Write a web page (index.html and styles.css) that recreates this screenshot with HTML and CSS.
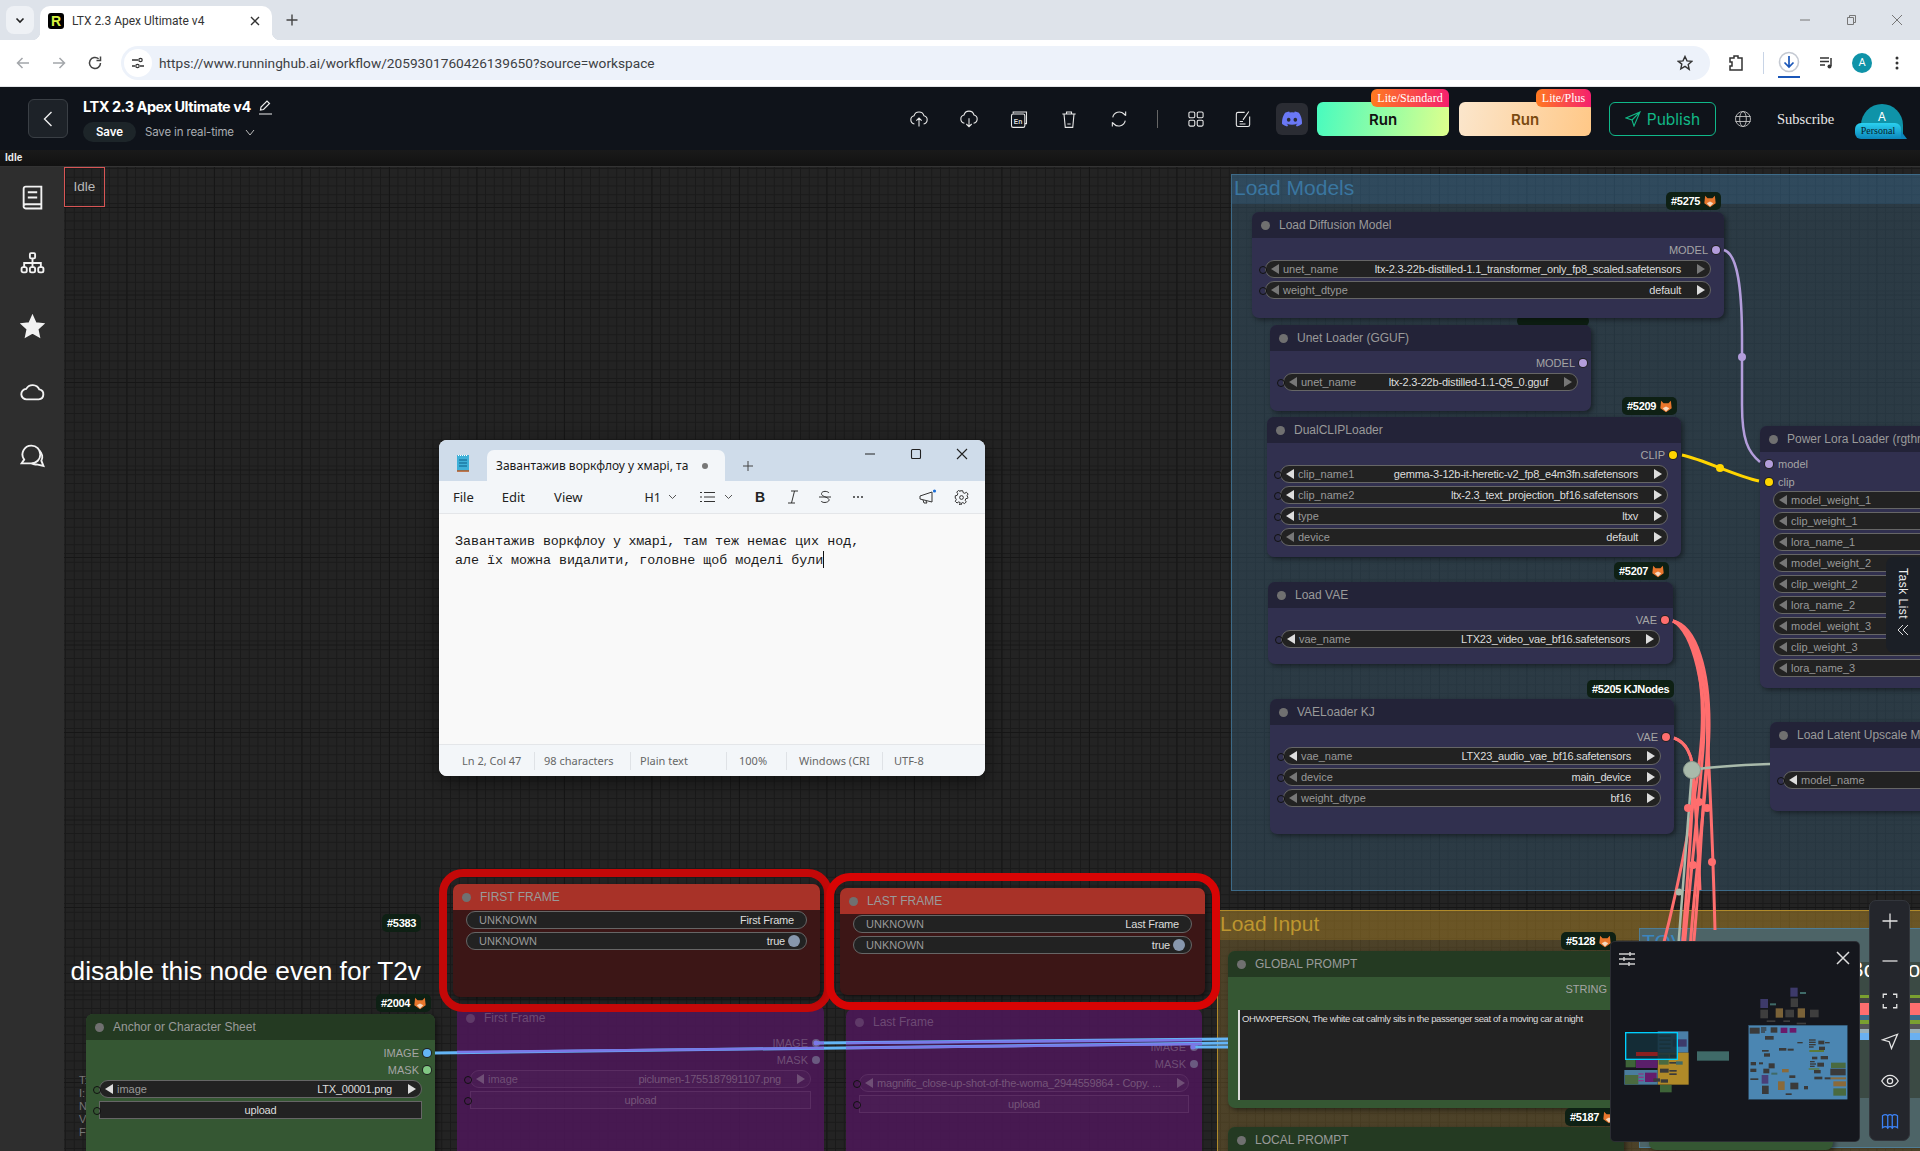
FILE: index.html
```html
<!DOCTYPE html>
<html lang="en">
<head>
    <meta charset="UTF-8">
    <meta name="viewport" content="width=device-width, initial-scale=1.0">
    <title>LTX 2.3 Apex Ultimate v4</title>
    <link rel="stylesheet" href="styles.css">
</head>
<body>
<svg class="defs" width="0" height="0">
    <symbol id="fox" viewBox="0 0 14 16"><path d="M1 1l3 3h6l3-3 1 9-7 5-7-5z" fill="#e8762c"/><path d="M3 10l4-2 4 2-4 4z" fill="#f5d9c0"/></symbol>
</svg>

<!-- browser chrome -->
<div class="tabstrip">
    <div class="tab-menu"><svg width="12" height="12" viewBox="0 0 12 12"><path d="M2.5 4.5L6 8l3.5-3.5" fill="none" stroke="#222" stroke-width="1.6"/></svg></div>
    <div class="tab">
        <span class="favicon">R</span>
        <span class="tab-title">LTX 2.3 Apex Ultimate v4</span>
        <svg width="12" height="12" viewBox="0 0 12 12"><path d="M2 2l8 8M10 2l-8 8" stroke="#333" stroke-width="1.4"/></svg>
    </div>
    <svg class="tab-new" width="14" height="14" viewBox="0 0 14 14"><path d="M7 1.5v11M1.5 7h11" stroke="#444" stroke-width="1.4"/></svg>
    <div class="win-controls">
        <svg width="12" height="12" viewBox="0 0 12 12"><path d="M1 6h10" stroke="#777"/></svg>
        <svg width="12" height="12" viewBox="0 0 12 12"><path d="M2.5 3.5h6v7h-6zM4.5 3.5v-2h6v7h-2" fill="none" stroke="#777"/></svg>
        <svg width="12" height="12" viewBox="0 0 12 12"><path d="M1 1l10 10M11 1L1 11" stroke="#777"/></svg>
    </div>
</div>
<div class="toolbar">
    <svg width="16" height="16" viewBox="0 0 16 16"><path d="M14 8H2.5M7.5 3l-5 5 5 5" fill="none" stroke="#a3a6aa" stroke-width="1.5"/></svg>
    <svg class="ic-fwd" width="16" height="16" viewBox="0 0 16 16"><path d="M2 8h11.5M8.5 3l5 5-5 5" fill="none" stroke="#a3a6aa" stroke-width="1.5"/></svg>
    <svg class="ic-fwd" width="16" height="16" viewBox="0 0 16 16"><path d="M13.5 8A5.5 5.5 0 1 1 11.6 3.8M13.5 1.5v4h-4" fill="none" stroke="#444" stroke-width="1.5"/></svg>
    <div class="urlbar">
        <span class="site-ic"><svg width="14" height="14" viewBox="0 0 14 14"><path d="M1 4h6M1 10h3M9 10h4" stroke="#333" stroke-width="1.3"/><circle cx="9.5" cy="4" r="1.7" fill="none" stroke="#333" stroke-width="1.2"/><circle cx="6.5" cy="10" r="1.7" fill="none" stroke="#333" stroke-width="1.2"/></svg></span>
        <span class="url">https://www.runninghub.ai/workflow/2059301760426139650?source=workspace</span>
        <svg class="url-star" width="16" height="16" viewBox="0 0 16 16"><path d="M8 1.5l2 4.4 4.7.5-3.5 3.2 1 4.7L8 11.4l-4.2 2.4 1-4.7L1.3 6.4 6 5.9z" fill="none" stroke="#333" stroke-width="1.4"/></svg>
    </div>
    <svg class="ic-ext" width="16" height="18" viewBox="0 0 16 18"><path d="M2 4h4V2h4v2h4v12H2v-4h2V8H2z" fill="none" stroke="#333" stroke-width="1.5"/></svg>
    <span class="tool-sep"></span>
    <span class="ic-dl"><svg width="22" height="22" viewBox="0 0 22 22"><circle cx="11" cy="11" r="9.5" fill="none" stroke="#c4c9d2" stroke-width="1.6"/><path d="M11 5v11M6.5 11.5L11 16l4.5-4.5" fill="none" stroke="#1a56b8" stroke-width="1.7"/></svg></span>
    <svg class="ic-media" width="16" height="16" viewBox="0 0 16 16"><path d="M1 3h9M1 6.5h9M1 10h5" stroke="#333" stroke-width="1.5"/><path d="M12 3v8" stroke="#333" stroke-width="1.5"/><circle cx="10.5" cy="11.5" r="2" fill="#333"/></svg>
    <span class="chrome-avatar">A</span>
    <svg class="ic-more" width="4" height="14" viewBox="0 0 4 14"><circle cx="2" cy="2" r="1.5" fill="#333"/><circle cx="2" cy="7" r="1.5" fill="#333"/><circle cx="2" cy="12" r="1.5" fill="#333"/></svg>
</div>

<!-- app header -->
<header class="app-header">
    <button class="back-btn"><svg width="10" height="16" viewBox="0 0 10 16"><path d="M8.5 1L1.5 8l7 7" fill="none" stroke="#eee" stroke-width="1.4"/></svg></button>
    <div class="title-col">
        <div class="wf-title">LTX 2.3 Apex Ultimate v4
            <svg width="15" height="16" viewBox="0 0 15 16"><path d="M2.5 11l.5-3 6-6 2.5 2.5-6 6zM1 15h13" fill="none" stroke="#eee" stroke-width="1.2"/></svg>
        </div>
        <div class="save-row">
            <span class="save-btn">Save</span>
            <span class="save-mode">Save in real-time</span>
            <svg width="10" height="7" viewBox="0 0 10 7"><path d="M1 1l4 5 4-5" fill="none" stroke="#bbb" stroke-width="1"/></svg>
        </div>
    </div>
    <div class="head-tools">
        <svg class="ht" viewBox="0 0 24 24"><path d="M6.500 18A5 5 0 0 1 6 8.200a6.200 6.200 0 0 1 12 0A5 5 0 0 1 17.500 18M12 21v-10M8.800 14l3.200-3.200 3.200 3.200"/></svg>
        <svg class="ht" viewBox="0 0 24 24"><path d="M6.500 17A5 5 0 0 1 6 7.200a6.200 6.200 0 0 1 12 0A5 5 0 0 1 17.500 17M12 11v10M8.800 18l3.200 3.200 3.200-3.200"/></svg>
        <svg class="ht" viewBox="0 0 24 24"><path d="M5 5.500V3.500h16v14h-2"/><rect x="3" y="6" width="16" height="16" rx="2"/><text x="5.800" y="17.500" class="ht-en">En</text></svg>
        <svg class="ht" viewBox="0 0 24 24"><path d="M4 6h16M9 6V3.500h6V6M6 6l1.500 16h9L18 6M10 18h4"/></svg>
        <svg class="ht" viewBox="0 0 24 24"><path d="M4.500 10a8 8 0 0 1 13.500-4l2 2M19.500 14A8 8 0 0 1 6 18l-2-2M20 3v5M4 21v-5"/></svg>
        <span class="head-sep"></span>
        <svg class="ht ht-grid" viewBox="0 0 24 24"><rect x="3.500" y="3.500" width="7" height="7" rx="1.500"/><rect x="13.500" y="3.500" width="7" height="7" rx="1.500"/><rect x="3.500" y="13.500" width="7" height="7" rx="1.500"/><rect x="13.500" y="13.500" width="7" height="7" rx="1.500"/></svg>
        <svg class="ht ht-note" viewBox="0 0 24 24"><path d="M14 4H6a2 2 0 0 0-2 2v13a2 2 0 0 0 2 2h12a2 2 0 0 0 2-2V9M12 13l7-10M8 15h4M8 18h7"/></svg>
        <span class="discord"><svg width="20" height="20" viewBox="0 0 24 24"><path fill="#6a78f5" d="M20.317 4.37a19.791 19.791 0 0 0-4.885-1.515.074.074 0 0 0-.079.037c-.21.375-.444.864-.608 1.25a18.27 18.27 0 0 0-5.487 0 12.64 12.64 0 0 0-.617-1.25.077.077 0 0 0-.079-.037A19.736 19.736 0 0 0 3.677 4.37a.07.07 0 0 0-.032.027C.533 9.046-.32 13.58.099 18.057a.082.082 0 0 0 .031.057 19.9 19.9 0 0 0 5.993 3.03.078.078 0 0 0 .084-.028c.462-.63.874-1.295 1.226-1.994a.076.076 0 0 0-.041-.106 13.107 13.107 0 0 1-1.872-.892.077.077 0 0 1-.008-.128 10.2 10.2 0 0 0 .372-.292.074.074 0 0 1 .077-.01c3.928 1.793 8.18 1.793 12.062 0a.074.074 0 0 1 .078.01c.12.098.246.198.373.292a.077.077 0 0 1-.006.127 12.299 12.299 0 0 1-1.873.892.077.077 0 0 0-.041.107c.36.698.772 1.362 1.225 1.993a.076.076 0 0 0 .084.028 19.839 19.839 0 0 0 6.002-3.03.077.077 0 0 0 .032-.054c.5-5.177-.838-9.674-3.549-13.66a.061.061 0 0 0-.031-.03zM8.020 15.330c-1.183 0-2.157-1.085-2.157-2.419 0-1.333.956-2.419 2.157-2.419 1.210 0 2.176 1.096 2.157 2.420 0 1.333-.956 2.418-2.157 2.418zm7.975 0c-1.183 0-2.157-1.085-2.157-2.419 0-1.333.955-2.419 2.157-2.419 1.210 0 2.176 1.096 2.157 2.420 0 1.333-.946 2.418-2.157 2.418z"/></svg></span>
        <button class="run run-std">Run<span class="tier">Lite/Standard</span></button>
        <button class="run run-plus">Run<span class="tier">Lite/Plus</span></button>
        <button class="publish"><svg width="16" height="16" viewBox="0 0 16 16"><path d="M15 1L1 7l6 2 2 6zM15 1L7 9" fill="none" stroke="#12b886" stroke-width="1.1"/></svg>Publish</button>
        <svg class="ht ht-globe" viewBox="0 0 24 24"><circle cx="12" cy="12" r="9"/><ellipse cx="12" cy="12" rx="4" ry="9"/><path d="M3 9h18M3 15h18"/></svg>
        <span class="subscribe">Subscribe</span>
        <span class="user"><span class="user-a">A</span><span class="user-tag">Personal</span></span>
    </div>
</header>
<div class="status-strip">Idle</div>

<div class="workspace">
    <aside class="sidebar">
        <svg viewBox="0 0 24 24"><path d="M3.500 20V3.500A2 2 0 0 1 5.500 1.500h15v21h-15a2 2 0 0 1-2-2.500 2 2 0 0 1 2-1.500h15M7.500 7h9M7.500 12h9"/></svg>
        <svg viewBox="0 0 24 24"><rect x="9.500" y="3" width="5" height="5" rx="1"/><rect x="1.500" y="16.500" width="5" height="5" rx="1.500"/><rect x="9.500" y="16.500" width="5" height="5" rx="1.500"/><rect x="17.500" y="16.500" width="5" height="5" rx="1.500"/><path d="M12 8v8.500M4 16.500v-4h16v4"/></svg>
        <svg viewBox="0 0 24 24"><path class="solid" d="M12 2l3 6.700 7.200.8-5.400 4.900 1.500 7.200L12 18l-6.300 3.600 1.500-7.200L1.800 9.500 9 8.700z"/></svg>
        <svg viewBox="0 0 24 24"><path d="M6.500 19.500a5 5 0 0 1-.5-10A7 7 0 0 1 18.500 10 4.800 4.800 0 0 1 18 19.500z"/></svg>
        <svg viewBox="0 0 24 24"><path d="M11 2.500a8.500 8.500 0 0 1 0 17H1.500l2.500-3.500A8.500 8.500 0 0 1 11 2.500z"/><path d="M18.500 7.500a7.500 7.500 0 0 1 2 9.500l2 5-6.500-1.500a7 7 0 0 1-5-1"/></svg>
    </aside>

    <main class="canvas">
        <!-- groups -->
        <section class="group g-models"><h3>Load Models</h3></section>
        <section class="group g-input"><h3>Load Input</h3></section>
        <section class="group g-tov"><h3>TOV</h3></section>
        <div class="tov-body"></div>
        <span class="big-frag frag-a">Bo</span>
        <span class="big-frag frag-b">ox</span>
        <div class="stripes stripes-a"></div>
        <div class="stripes stripes-b"></div>

        <div class="under-badge"></div>

        <div class="note">t disable this node even for T2v</div>
        <div class="side-text">T:<br>I:<br>N<br>V<br>F</div>
        <div class="idle-box">Idle</div>

        <!-- load models -->
        <div class="node n-5275">
            <div class="node-head"><b class="dot"></b>Load Diffusion Model</div>
            <div class="node-body">
                <div class="out">MODEL<b class="sock s-model"></b></div>
                <div class="w"><i class="l off"></i><span>unet_name</span><em>ltx-2.3-22b-distilled-1.1_transformer_only_fp8_scaled.safetensors</em><i class="r off"></i></div>
                <div class="w"><i class="l off"></i><span>weight_dtype</span><em>default</em><i class="r"></i></div>
            </div>
        </div>
        <div class="node n-unet">
            <div class="node-head"><b class="dot"></b>Unet Loader (GGUF)</div>
            <div class="node-body">
                <div class="out">MODEL<b class="sock s-model"></b></div>
                <div class="w"><i class="l off"></i><span>unet_name</span><em>ltx-2.3-22b-distilled-1.1-Q5_0.gguf</em><i class="r off"></i></div>
            </div>
        </div>
        <div class="node n-dual">
            <div class="node-head"><b class="dot"></b>DualCLIPLoader</div>
            <div class="node-body">
                <div class="out">CLIP<b class="sock s-clip"></b></div>
                <div class="w"><i class="l"></i><span>clip_name1</span><em>gemma-3-12b-it-heretic-v2_fp8_e4m3fn.safetensors</em><i class="r"></i></div>
                <div class="w"><i class="l"></i><span>clip_name2</span><em>ltx-2.3_text_projection_bf16.safetensors</em><i class="r"></i></div>
                <div class="w"><i class="l"></i><span>type</span><em>ltxv</em><i class="r"></i></div>
                <div class="w"><i class="l off"></i><span>device</span><em>default</em><i class="r"></i></div>
            </div>
        </div>
        <div class="node n-vae">
            <div class="node-head"><b class="dot"></b>Load VAE</div>
            <div class="node-body">
                <div class="out">VAE<b class="sock s-vae"></b></div>
                <div class="w"><i class="l"></i><span>vae_name</span><em>LTX23_video_vae_bf16.safetensors</em><i class="r"></i></div>
            </div>
        </div>
        <div class="node n-kj">
            <div class="node-head"><b class="dot"></b>VAELoader KJ</div>
            <div class="node-body">
                <div class="out">VAE<b class="sock s-vae"></b></div>
                <div class="w"><i class="l"></i><span>vae_name</span><em>LTX23_audio_vae_bf16.safetensors</em><i class="r"></i></div>
                <div class="w"><i class="l off"></i><span>device</span><em>main_device</em><i class="r"></i></div>
                <div class="w"><i class="l off"></i><span>weight_dtype</span><em>bf16</em><i class="r"></i></div>
            </div>
        </div>
        <div class="node n-lora">
            <div class="node-head"><b class="dot"></b>Power Lora Loader (rgthree)</div>
            <div class="node-body">
                <div class="in"><b class="sock s-model"></b>model</div>
                <div class="in"><b class="sock s-clip"></b>clip</div>
                <div class="w no-sock"><i class="l off"></i><span>model_weight_1</span></div>
                <div class="w no-sock"><i class="l off"></i><span>clip_weight_1</span></div>
                <div class="w no-sock"><i class="l off"></i><span>lora_name_1</span></div>
                <div class="w no-sock"><i class="l off"></i><span>model_weight_2</span></div>
                <div class="w no-sock"><i class="l off"></i><span>clip_weight_2</span></div>
                <div class="w no-sock"><i class="l off"></i><span>lora_name_2</span></div>
                <div class="w no-sock"><i class="l off"></i><span>model_weight_3</span></div>
                <div class="w no-sock"><i class="l off"></i><span>clip_weight_3</span></div>
                <div class="w no-sock"><i class="l off"></i><span>lora_name_3</span></div>
            </div>
        </div>
        <div class="node n-upscale">
            <div class="node-head"><b class="dot"></b>Load Latent Upscale Model</div>
            <div class="node-body upscale-body">
                <div class="w"><i class="l"></i><span>model_name</span></div>
            </div>
        </div>

        <!-- muted nodes under the red frames -->
        <div class="node muted n-ff2">
            <div class="node-head"><b class="dot"></b>First Frame</div>
            <div class="node-body">
                <div class="out">IMAGE<b class="sock"></b></div>
                <div class="out">MASK<b class="sock"></b></div>
                <div class="w"><i class="l off"></i><span>image</span><em>piclumen-1755187991107.png</em><i class="r off"></i></div>
                <div class="w up"><em>upload</em></div>
            </div>
        </div>
        <div class="node muted n-lf2">
            <div class="node-head"><b class="dot"></b>Last Frame</div>
            <div class="node-body">
                <div class="out">IMAGE<b class="sock"></b></div>
                <div class="out">MASK<b class="sock"></b></div>
                <div class="w"><i class="l off"></i><span></span><em>magnific_close-up-shot-of-the-woma_2944559864 - Copy. ...</em><i class="r off"></i></div>
                <div class="w up"><em>upload</em></div>
            </div>
        </div>

        <div class="frame frame-first"></div>
        <div class="node red n-ff">
            <div class="node-head"><b class="dot"></b>FIRST FRAME</div>
            <div class="node-body red-body">
                <div class="w plain"><span>UNKNOWN</span><em>First Frame</em></div>
                <div class="w plain"><span>UNKNOWN</span><em>true</em><u></u></div>
            </div>
        </div>
        <div class="frame frame-last"></div>
        <div class="node red n-lf">
            <div class="node-head"><b class="dot"></b>LAST FRAME</div>
            <div class="node-body red-body">
                <div class="w plain"><span>UNKNOWN</span><em>Last Frame</em></div>
                <div class="w plain"><span>UNKNOWN</span><em>true</em><u></u></div>
            </div>
        </div>

        <!-- load input -->
        <div class="node green n-anchor">
            <div class="node-head"><b class="dot"></b>Anchor or Character Sheet</div>
            <div class="node-body">
                <div class="out">IMAGE<b class="sock s-image"></b></div>
                <div class="out">MASK<b class="sock s-mask"></b></div>
                <div class="w"><i class="l"></i><span>image</span><em>LTX_00001.png</em><i class="r"></i></div>
                <div class="w up"><em>upload</em></div>
            </div>
        </div>
        <div class="node green n-global">
            <div class="node-head"><b class="dot"></b>GLOBAL PROMPT</div>
            <div class="node-body">
                <div class="out string-out">STRING</div>
                <div class="prompt">OHWXPERSON, The white cat calmly sits in the passenger seat of a moving car at night</div>
            </div>
        </div>
        <div class="node green n-local">
            <div class="node-head"><b class="dot"></b>LOCAL PROMPT</div>
        </div>
        <div class="node green n-hidden"></div>

        <!-- links -->
        <svg class="links" viewBox="64 167 1856 984">
            <g class="l-red">
                <path d="M1673 621C1698 630 1706 680 1707 720S1712 810 1715 930"/>
                <path d="M1673 621C1695 628 1704 680 1702 730S1680 880 1662 950"/>
                <path d="M1673 621C1693 632 1708 690 1703 750S1690 880 1684 950"/>
                <path d="M1673 621C1698 630 1712 700 1706 770S1700 880 1693 950"/>
                <path d="M1673 621C1696 626 1710 670 1709 730S1696 860 1690 950"/>
                <path d="M1674 738C1686 742 1692 755 1693 770S1698 840 1700 890"/>
                <path d="M1674 738C1686 742 1692 755 1693 770S1690 850 1682 950"/>
            </g>
            <path class="l-grey" d="M1692 770C1715 766 1740 765 1770 764M1692 770L1678 950"/>
            <path class="l-purple" d="M1724 250C1738 254 1742 290 1742 340V405C1742 440 1748 452 1760 462"/>
            <path class="l-yellow" d="M1682 455C1705 460 1735 476 1759 481"/>
            <g class="dots-red">
                <circle cx="1688" cy="808" r="4"/><circle cx="1699" cy="802" r="4"/><circle cx="1707" cy="808" r="4"/><circle cx="1693" cy="865" r="4"/><circle cx="1712" cy="862" r="4"/>
            </g>
            <circle cx="1679" cy="892" r="3.500" fill="#a9baab"/>
            <circle cx="1692" cy="770" r="8.500" fill="#a9baab" stroke="#8c9c8e"/>
            <circle cx="1742" cy="357" r="4" fill="#b39ddb"/>
            <circle cx="1720" cy="468" r="4" fill="#ffd500"/>
            <g class="l-blue">
                <path d="M435 1053L1228 1043"/>
                <path d="M816 1043L1228 1039"/>
                <path d="M1193 1047H1228"/>
            </g>
            <g class="l-violet">
                <path d="M457 1052L824 1048"/>
                <path d="M846 1048L1202 1044"/>
                <path d="M816 1043L824 1043M846 1043L1202 1040"/>
            </g>
            <circle cx="816" cy="1043" r="2.500" fill="#7a78e8"/>
            <circle cx="1193" cy="1047" r="2.500" fill="#7a78e8"/>
        </svg>

        <!-- id badges -->
        <span class="badge b-5275">#5275 <svg><use href="#fox"/></svg></span>
        <span class="badge b-5209">#5209 <svg><use href="#fox"/></svg></span>
        <span class="badge b-5207">#5207 <svg><use href="#fox"/></svg></span>
        <span class="badge b-5205">#5205 KJNodes</span>
        <span class="badge b-5383">#5383</span>
        <span class="badge b-2004">#2004 <svg><use href="#fox"/></svg></span>
        <span class="badge b-5128">#5128 <svg><use href="#fox"/></svg></span>
        <span class="badge b-5187">#5187 <svg><use href="#fox"/></svg></span>

        <!-- notepad window -->
        <div class="notepad">
            <div class="np-title">
                <svg class="np-icon" width="14" height="18" viewBox="0 0 14 18"><rect x="1" y="1" width="12" height="16" fill="#3fb0d8"/><path d="M3 6h8M3 9h8M3 12h8" stroke="#0d5f8a"/><path d="M1 17h12" stroke="#b8541a" stroke-width="1.500"/><path d="M2 1.500h10" stroke="#fff" stroke-dasharray="1 1"/></svg>
                <div class="np-tab"><span>Завантажив воркфлоу у хмарі, та</span><b></b></div>
                <svg class="np-plus" width="12" height="12" viewBox="0 0 12 12"><path d="M6 1v10M1 6h10" stroke="#444"/></svg>
                <div class="np-win">
                    <svg width="12" height="12" viewBox="0 0 12 12"><path d="M1 6h10" stroke="#222" stroke-width="1.100"/></svg>
                    <svg width="12" height="12" viewBox="0 0 12 12"><rect x="1.500" y="1.500" width="9" height="9" rx="1" fill="none" stroke="#222" stroke-width="1.100"/></svg>
                    <svg width="12" height="12" viewBox="0 0 12 12"><path d="M1 1l10 10M11 1L1 11" stroke="#222" stroke-width="1.100"/></svg>
                </div>
            </div>
            <div class="np-menu">
                <span class="np-m m-file">File</span><span class="np-m m-edit">Edit</span><span class="np-m m-view">View</span>
                <span class="np-h1">H1</span>
                <svg class="np-chev" width="9" height="6" viewBox="0 0 9 6"><path d="M1 1l3.500 3.500L8 1" fill="none" stroke="#555"/></svg>
                <svg class="np-list" width="15" height="12" viewBox="0 0 15 12"><path d="M4 1.500h11M4 6h11M4 10.500h11" stroke="#333"/><path d="M0 1.500h2M0 6h2M0 10.500h2" stroke="#333"/></svg>
                <svg class="np-chev" width="9" height="6" viewBox="0 0 9 6"><path d="M1 1l3.500 3.500L8 1" fill="none" stroke="#555"/></svg>
                <b class="np-b">B</b>
                <svg class="np-i" width="14" height="14" viewBox="0 0 14 14"><path d="M5 1h7M2 13h7M8.500 1l-3 12" fill="none" stroke="#333"/></svg>
                <svg class="np-s" width="14" height="14" viewBox="0 0 14 14"><path d="M11 3C10 1 4 .5 3.500 3.500S10 7 11 9.500 5 14 3 11M1 7h12" fill="none" stroke="#333"/></svg>
                <svg class="np-more" width="12" height="4" viewBox="0 0 12 4"><circle cx="2" cy="2" r="1" fill="#333"/><circle cx="6" cy="2" r="1" fill="#333"/><circle cx="10" cy="2" r="1" fill="#333"/></svg>
                <svg class="np-ann" width="18" height="16" viewBox="0 0 18 16"><path d="M1 7l12-4v10L1 10zM4 11l1 3h3l-1-2" fill="none" stroke="#333"/><circle cx="15.500" cy="2" r="1.600" fill="#1a6ed8"/></svg>
                <svg class="np-gear" width="15" height="15" viewBox="0 0 24 24"><circle cx="12" cy="12" r="3" fill="none" stroke="#333" stroke-width="1.600"/><path d="M10 2h4l.6 3 2.600 1.100 2.600-1.700 2.800 2.800-1.700 2.600L22 12.400V14l-3 .6-1.100 2.600 1.700 2.600-2.800 2.800-2.600-1.700-2.200.8-.6 3h-2.800L10 21l-2.600-1.100-2.600 1.700-2.800-2.800 1.700-2.600L2.600 14 2 14v-4l3-.6 1.100-2.600-1.700-2.600 2.800-2.800 2.600 1.700z" transform="translate(0 -.8)" fill="none" stroke="#333" stroke-width="1.600"/></svg>
            </div>
            <div class="np-text">Завантажив <span class="np-tight">воркфлоу у хмарі,</span> там теж немає цих нод,<br>але їх можна видалити, головне щоб моделі були<span class="caret"></span></div>
            <div class="np-status">
                <span class="st-1">Ln 2, Col 47</span><span class="st-2">98 characters</span><span class="st-3">Plain text</span><span class="st-4">100%</span><span class="st-5">Windows (CRI</span><span class="st-6">UTF-8</span>
            </div>
        </div>

        <!-- task list tab -->
        <div class="task-tab">
            <span>Task List</span>
            <svg width="12" height="12" viewBox="0 0 12 12"><path d="M6 1L1 6l5 5M11 1L6 6l5 5" fill="none" stroke="#ddd"/></svg>
        </div>

        <!-- minimap -->
        <div class="minimap">
            <svg class="mini-set" width="18" height="16" viewBox="0 0 18 16"><path d="M1 3h16M1 8h16M1 13h16" stroke="#ccc" stroke-width="1.500"/><path d="M12 1v4M6 6v4M11 11v4" stroke="#ccc" stroke-width="1.500"/></svg>
            <svg class="mini-x" width="14" height="14" viewBox="0 0 14 14"><path d="M1 1l12 12M13 1L1 13" stroke="#ddd" stroke-width="1.500"/></svg>
            <svg class="mini-map" viewBox="3 156 744 597">
                <rect x="143" y="424" width="92" height="64" fill="#4a7fa8"/>
                <rect x="143" y="488" width="93" height="96" fill="#b08a28"/>
                <rect x="47" y="508" width="30" height="24" fill="#3e6438"/>
                <rect x="78" y="510" width="65" height="24" fill="#5a1f6a"/>
                <rect x="43" y="540" width="100" height="44" fill="#4a7d9e"/>
                <rect x="45" y="555" width="40" height="28" fill="#4a6a40"/>
                <rect x="105" y="548" width="35" height="28" fill="#641c6c"/>
                <rect x="150" y="585" width="35" height="22" fill="#3e6438"/>
                <g class="mm-dark">
                    <rect x="148" y="436" width="34" height="5"/><rect x="148" y="448" width="34" height="5"/><rect x="148" y="460" width="34" height="5"/><rect x="148" y="472" width="34" height="5"/><rect x="188" y="448" width="42" height="22" fill="#3d3a6a"/>
                    <rect x="146" y="494" width="30" height="30" fill="#4a6a40"/><rect x="180" y="494" width="24" height="8"/><rect x="178" y="516" width="22" height="5"/><rect x="198" y="514" width="20" height="10" fill="#3f6a68"/><rect x="150" y="536" width="26" height="12"/><rect x="178" y="540" width="22" height="5"/><rect x="178" y="550" width="22" height="5"/><rect x="152" y="568" width="22" height="10"/><rect x="130" y="565" width="20" height="10"/><rect x="85" y="550" width="16" height="4" fill="#8a3a8a"/><rect x="85" y="560" width="16" height="4" fill="#8a3a8a"/><rect x="85" y="570" width="16" height="4" fill="#8a3a8a"/>
                </g>
                <rect x="261" y="484" width="96" height="28" fill="#3f6a68"/>
                <rect x="416" y="406" width="296" height="222" fill="#4b86b2" stroke="#345f80"/>
                <rect x="541" y="293" width="22" height="27" fill="#3d3a6a"/><rect x="451" y="327" width="23" height="27" fill="#3d3a6a"/><rect x="542" y="325" width="22" height="26" fill="#3e3e3e"/><rect x="451" y="359" width="23" height="26" fill="#3e3e3e"/><rect x="497" y="355" width="22" height="28" fill="#7a6238"/><rect x="526" y="359" width="26" height="23" fill="#3e3e3e"/><rect x="563" y="355" width="22" height="28" fill="#7a6238"/><rect x="600" y="359" width="26" height="23" fill="#3e3e3e"/><rect x="570" y="306" width="18" height="6" fill="#3f6a68"/><rect x="480" y="340" width="18" height="6" fill="#3f6a68"/><rect x="470" y="391" width="26" height="5" fill="#3e3e3e"/><rect x="520" y="391" width="20" height="5" fill="#3e3e3e"/><rect x="560" y="398" width="28" height="5" fill="#3e3e3e"/>
                <g class="mm-dark">
                    <rect x="419" y="413" width="30" height="18"/><rect x="453" y="412" width="16" height="4"/><rect x="453" y="418" width="16" height="4"/><rect x="453" y="424" width="12" height="4"/><rect x="482" y="412" width="20" height="16"/><rect x="512" y="413" width="20" height="16" fill="#6a1a6a"/><rect x="539" y="414" width="20" height="14" fill="#6a1a6a"/>
                    <rect x="465" y="438" width="26" height="11"/><rect x="562" y="456" width="16" height="4"/><rect x="597" y="448" width="20" height="4"/><rect x="597" y="455" width="20" height="4"/><rect x="597" y="462" width="20" height="4"/><rect x="597" y="469" width="14" height="4"/><rect x="625" y="452" width="18" height="11"/><rect x="645" y="456" width="14" height="4"/><rect x="627" y="470" width="18" height="10"/><rect x="507" y="474" width="22" height="8"/><rect x="533" y="476" width="18" height="6"/><rect x="456" y="480" width="20" height="5"/><rect x="462" y="490" width="18" height="10"/><rect x="598" y="480" width="44" height="6" fill="#5a7a3a"/><rect x="606" y="500" width="16" height="8"/><rect x="632" y="498" width="22" height="10"/><rect x="422" y="516" width="16" height="10"/><rect x="447" y="517" width="12" height="6"/><rect x="476" y="520" width="18" height="15"/><rect x="600" y="513" width="14" height="4"/><rect x="600" y="520" width="18" height="4"/><rect x="600" y="527" width="14" height="4"/><rect x="622" y="518" width="20" height="12"/><rect x="421" y="536" width="18" height="10"/><rect x="460" y="536" width="18" height="14"/><rect x="484" y="548" width="18" height="6" fill="#3f6a68"/><rect x="516" y="537" width="20" height="10" fill="#8a6a3a"/><rect x="596" y="535" width="32" height="4" fill="#5a7a3a"/><rect x="612" y="540" width="20" height="10"/><rect x="538" y="556" width="18" height="8"/><rect x="613" y="560" width="24" height="8"/><rect x="644" y="562" width="18" height="6"/><rect x="421" y="565" width="24" height="5"/><rect x="455" y="555" width="20" height="26" fill="#4a3f78"/><rect x="456" y="587" width="20" height="25"/><rect x="504" y="574" width="20" height="26" fill="#8a6a3a"/><rect x="541" y="578" width="24" height="20"/><rect x="582" y="588" width="12" height="10"/><rect x="527" y="610" width="18" height="5"/><rect x="663" y="518" width="44" height="16" fill="#4a6a40"/><rect x="661" y="536" width="46" height="20"/><rect x="662" y="562" width="46" height="6" fill="#8a6a3a"/><rect x="670" y="574" width="38" height="15" fill="#8a6a3a"/><rect x="670" y="595" width="38" height="22" fill="#4a6a40"/>
                </g>
                <rect x="47" y="428" width="155" height="80" fill="#14303a" fill-opacity=".88"/>
                <rect x="78" y="486" width="65" height="12" fill="#8a2020"/>
                <rect x="47" y="428" width="155" height="80" fill="none" stroke="#00d0ff" stroke-width="4"/>
            </svg>
        </div>

        <!-- zoom controls -->
        <div class="controls">
            <svg viewBox="0 0 24 24"><path d="M12 2v20M2 12h20"/></svg>
            <svg viewBox="0 0 24 24"><path d="M2 12h20"/></svg>
            <svg viewBox="0 0 24 24"><path d="M8 3H3v5M16 3h5v5M8 21H3v-5M16 21h5v-5"/></svg>
            <svg viewBox="0 0 24 24"><path d="M22 3L2 10.500l9 2.500 3 9z"/></svg>
            <svg viewBox="0 0 24 24"><path d="M1 12c3-5 7-7.500 11-7.500s8 2.500 11 7.500c-3 5-7 7.500-11 7.500S4 17 1 12z"/><circle cx="12" cy="12" r="3.500"/></svg>
            <svg class="ctl-map" viewBox="0 0 24 24"><path d="M2 5c3-2 5-2 7 0v16c-2-2-4-2-7 0zM9 5c2-2 4-2 6 0v16c-2-2-4-2-6 0zM15 5c2-2 4-2 7 0v16c-3-2-5-2-7 0z"/></svg>
        </div>
    </main>
</div>
</body>
</html>
```

FILE: styles.css
```css
* {
    box-sizing: border-box;
}
html, body {
    margin: 0;
    padding: 0;
    height: 100%;
    overflow: hidden;
}
body {
    display: flex;
    flex-direction: column;
    font-family: "Liberation Sans", Arial, sans-serif;
    background: #202020;
}
.defs {
    position: absolute;
}

/* browser chrome */
.tabstrip {
    height: 40px;
    background: #dee3ea;
    display: flex;
    align-items: flex-end;
    flex: none;
}
.tab-menu {
    width: 28px;
    height: 28px;
    margin: 0 0 6px 6px;
    background: #eef1f5;
    border-radius: 8px;
    display: flex;
    align-items: center;
    justify-content: center;
}
.tab {
    position: relative;
    width: 232px;
    height: 34px;
    margin-left: 6px;
    padding: 0 11px 4px 8px;
    background: #fff;
    border-radius: 10px 10px 0 0;
    display: flex;
    align-items: center;
    gap: 8px;
}
.tab::before, .tab::after {
    content: "";
    position: absolute;
    bottom: 0;
    width: 8px;
    height: 8px;
}
.tab::before {
    left: -8px;
    background: radial-gradient(circle at 0 0, #dee3ea 8px, #fff 8.500px);
}
.tab::after {
    right: -8px;
    background: radial-gradient(circle at 100% 0, #dee3ea 8px, #fff 8.500px);
}
.favicon {
    width: 16px;
    height: 16px;
    background: #000;
    border-radius: 3px;
    color: #d8f341;
    font: 700 14px/16px "Liberation Sans", sans-serif;
    text-align: center;
}
.tab-title {
    flex: 1;
    font: 12px Roboto, sans-serif;
    color: #333;
}
.tab-new {
    margin: 0 0 13px 13px;
}
.win-controls {
    margin-left: auto;
    padding-right: 17px;
    margin-bottom: 14px;
    display: flex;
    gap: 34px;
}
.toolbar {
    height: 47px;
    flex: none;
    background: #fff;
    border-bottom: 1px solid #e3e5e8;
    display: flex;
    align-items: center;
    padding: 0 0 0 15px;
}
.ic-fwd {
    margin-left: 20px;
}
.urlbar {
    width: 1589px;
    height: 34px;
    margin-left: 18px;
    background: #edf2fa;
    border-radius: 17px;
    display: flex;
    align-items: center;
    padding: 0 17px 0 3px;
}
.site-ic {
    width: 28px;
    height: 28px;
    border-radius: 50%;
    background: #fff;
    display: flex;
    align-items: center;
    justify-content: center;
}
.url {
    margin-left: 7px;
    font: 13.700px Roboto, sans-serif;
    color: #3c4043;
}
.url-star {
    margin-left: auto;
}
.ic-ext {
    margin-left: 18px;
}
.tool-sep {
    width: 1px;
    height: 22px;
    background: #c8d4e6;
    margin-left: 19px;
}
.ic-dl {
    position: relative;
    margin-left: 14px;
    height: 30px;
    display: flex;
    align-items: center;
    border-bottom: 2px solid #1a56b8;
}
.ic-media {
    margin-left: 19px;
}
.chrome-avatar {
    width: 20px;
    height: 20px;
    margin-left: 17px;
    border-radius: 50%;
    background: #0f93a8;
    color: #fff;
    font: 11px/20px Roboto, sans-serif;
    text-align: center;
}
.ic-more {
    margin-left: 23px;
}

/* app header */
.app-header {
    height: 63px;
    flex: none;
    background: #0f131a;
    display: flex;
    align-items: flex-start;
    padding: 12px 17px 0 28px;
    color: #eee;
}
.back-btn {
    width: 40px;
    height: 39px;
    background: #1d2228;
    border: 1px solid #3a3f45;
    border-radius: 6px;
    display: flex;
    align-items: center;
    justify-content: center;
    padding: 0;
}
.title-col {
    margin-left: 15px;
    margin-top: -1px;
}
.wf-title {
    font: 700 14.500px/17px Inter, sans-serif;
    color: #fff;
    display: flex;
    align-items: center;
    gap: 7px;
    letter-spacing: -0.45px;
}
.save-row {
    display: flex;
    align-items: center;
    margin-top: 7px;
    font: 11.500px Inter, sans-serif;
    color: #a9adb2;
}
.save-btn {
    width: 53px;
    height: 20px;
    line-height: 20px;
    text-align: center;
    border-radius: 10px;
    background: #1d2529;
    color: #fff;
    font-weight: 600;
}
.save-mode {
    margin: 0 11px 0 9px;
    letter-spacing: -0.15px;
}
.head-tools {
    margin-left: auto;
    display: flex;
    align-items: center;
    height: 34px;
    margin-top: 3px;
}
.ht {
    width: 20px;
    height: 20px;
    margin-right: 30px;
    fill: none;
    stroke: #e8e8e8;
    stroke-width: 1.300;
}
.ht-en {
    font: 700 8px "Liberation Sans", sans-serif;
    fill: #ddd;
    stroke: none;
}
.head-sep {
    width: 1px;
    height: 18px;
    background: #666;
    margin: 0 28px 0 -2px;
}
.ht-grid {
    margin-right: 27px;
}
.ht-note {
    margin-right: 23px;
}
.discord {
    width: 32px;
    height: 32px;
    background: #2a2c33;
    border-radius: 6px;
    display: flex;
    align-items: center;
    justify-content: center;
    margin-right: 9px;
}
.run {
    position: relative;
    width: 132px;
    height: 34px;
    border: 0;
    border-radius: 6px;
    font: 600 15px Inter, sans-serif;
    padding: 0;
}
.run-std {
    background: linear-gradient(100deg, #47fbbf, #dfff8c);
    color: #111;
    margin-right: 10px;
}
.run-plus {
    background: linear-gradient(100deg, #fbe6cc, #ffc887);
    color: #7a4a10;
    margin-right: 18px;
}
.tier {
    position: absolute;
    top: -13px;
    right: 0;
    height: 18px;
    padding: 0 3px;
    background: linear-gradient(90deg, #ff7a20, #f5206e);
    border-radius: 6px 6px 0 6px;
    color: #fff;
    font: 12px/18px "Liberation Serif", serif;
}
.run-std .tier {
    width: 78px;
}
.run-plus .tier {
    width: 55px;
}
.publish {
    width: 107px;
    height: 34px;
    background: transparent;
    border: 1px solid #10b98a;
    border-radius: 6px;
    color: #12b886;
    font: 15.500px Inter, sans-serif;
    display: flex;
    align-items: center;
    justify-content: center;
    gap: 6px;
    padding: 0;
    margin-right: 17px;
}
.ht-globe {
    margin-right: 24px;
    stroke: #ccc;
    stroke-width: 1;
}
.subscribe {
    font: 14.500px "Liberation Serif", serif;
    color: #e8e8e8;
    width: 61px;
    white-space: nowrap;
}
.user {
    position: relative;
    width: 42px;
    height: 34px;
    margin: 4px 0 0 23px;
    background: #0f93a8;
    border-radius: 21px 21px 0 0;
    color: #fff;
    text-align: center;
    font: 12px/26px Inter, sans-serif;
}
.user-tag {
    position: absolute;
    left: -6px;
    top: 19px;
    width: 46px;
    height: 16px;
    background: linear-gradient(180deg, #2bd0ef, #0b86bb);
    border-radius: 6px 6px 0 6px;
    color: #06222c;
    font: 10px/16px "Liberation Serif", serif;
}
.user-tag::after {
    content: "";
    position: absolute;
    right: -6px;
    bottom: 0;
    border-left: 6px solid #0b86bb;
    border-top: 8px solid transparent;
}
.status-strip {
    height: 17px;
    flex: none;
    background: linear-gradient(#1a1a1a, #121212);
    border-bottom: 1px solid #333;
    color: #eee;
    font: 700 10px/16px "Liberation Sans", sans-serif;
    padding-left: 5px;
}

/* workspace */
.workspace {
    flex: 1;
    display: flex;
    min-height: 0;
}
.sidebar {
    width: 64px;
    flex: none;
    background: #2e2e2e;
    display: flex;
    flex-direction: column;
    align-items: center;
    padding-top: 18px;
    gap: 39.500px;
    position: relative;
    z-index: 5;
}
.sidebar svg {
    width: 25px;
    height: 25px;
    fill: none;
    stroke: #f2f2f2;
    stroke-width: 1.800;
}
.sidebar .solid {
    fill: #f2f2f2;
}
.canvas {
    flex: 1;
    position: relative;
    overflow: hidden;
    background-color: #232323;
    background-image:
        linear-gradient(90deg, #161616 1px, transparent 1px),
        linear-gradient(#161616 1px, transparent 1px),
        linear-gradient(90deg, #1a1a1a 1px, transparent 1px),
        linear-gradient(#1a1a1a 1px, transparent 1px);
    background-size: 87.500px 87.500px, 87.500px 87.500px, 8.750px 8.750px, 8.750px 8.750px;
    background-position: 62.500px 40px, 62.500px 40px, 1px 1px, 1px 1px;
}
.idle-box {
    position: absolute;
    left: 0;
    top: 0;
    width: 41px;
    height: 40px;
    border: 1px solid #d85555;
    color: #b8b8b8;
    font: 13.500px/38px "Liberation Sans", sans-serif;
    text-align: center;
}
.note {
    position: absolute;
    left: -8px;
    top: 787px;
    font-size: 26.300px;
    line-height: 34px;
    color: #fff;
    white-space: nowrap;
}
.side-text {
    position: absolute;
    left: 15px;
    top: 907px;
    color: #777;
    font-size: 11px;
    line-height: 13px;
}

/* groups */
.group {
    position: absolute;
}
.group h3 {
    margin: 0;
    font-weight: 400;
    font-size: 21px;
    line-height: 26px;
    padding-left: 2px;
}
.g-models {
    left: 1167px;
    top: 7px;
    width: 720px;
    height: 717px;
    background: linear-gradient(rgba(60, 112, 150, .5) 29px, rgba(52, 82, 102, .5) 29px);
    border: 1px solid #3d6a88;
    border-width: 1px 0 1px 1px;
}
.g-models h3 {
    color: #3a76a0;
}
.g-input {
    left: 1153px;
    top: 743px;
    width: 720px;
    height: 260px;
    background: linear-gradient(rgba(170, 130, 40, .53) 29px, rgba(150, 120, 50, .36) 29px);
    border-top: 1px solid #b08a2a;
    border-left: 1px solid #b08a2a;
}
.g-input h3 {
    color: #bd962f;
}
.g-tov {
    left: 1575px;
    top: 761px;
    width: 300px;
    height: 220px;
    background: #4d6467;
    border: 1px solid #4f7d96;
    overflow: hidden;
}
.g-tov h3 {
    color: #3a86c0;
}
.tov-body {
    position: absolute;
    left: 1576px;
    top: 795px;
    width: 300px;
    height: 136px;
    background: #3b4a44;
}
.big-frag {
    position: absolute;
    top: 790px;
    color: #fff;
    font-size: 22px;
    line-height: 26px;
}
.frag-a {
    left: 1785px;
}
.frag-b {
    left: 1844px;
}
.stripes {
    position: absolute;
    top: 828px;
    width: 20px;
    height: 45px;
    background: linear-gradient(#7aa030 0 3px, #444 3px 8px, #ff6e6e 8px 20px, #3a6a8a 20px 25px, #7aa030 25px 29px, #555 29px 34px, #9ab0b8 34px 38px, #6ab0f0 38px);
}
.stripes-a {
    left: 1787px;
}
.stripes-b {
    left: 1836px;
}

/* nodes */
.node {
    position: absolute;
    background: #31304f;
    border-radius: 7px;
    box-shadow: 2px 2px 5px rgba(0, 0, 0, .45);
    font-size: 11px;
    color: #999;
}
.node-head {
    height: 26px;
    background: #232338;
    border-radius: 7px 7px 0 0;
    display: flex;
    align-items: center;
    padding-left: 9px;
    font-size: 12px;
    color: #9a9a9a;
    white-space: nowrap;
    overflow: hidden;
}
.dot {
    width: 9px;
    height: 9px;
    border-radius: 50%;
    background: #707070;
    margin-right: 9px;
    flex: none;
}
.node-body {
    padding: 3px 13px 0;
    display: flex;
    flex-direction: column;
}
.out {
    height: 18px;
    margin-bottom: -1px;
    display: flex;
    align-items: center;
    justify-content: flex-end;
    position: relative;
    color: #a5a5a5;
}
.in {
    height: 18px;
    display: flex;
    align-items: center;
    gap: 5px;
    color: #a5a5a5;
    margin-left: -8px;
}
.sock {
    width: 8px;
    height: 8px;
    border-radius: 50%;
    background: #888;
    flex: none;
}
.out .sock {
    margin-left: 4px;
    margin-right: -9px;
}
.s-model {
    background: #b39ddb;
    box-shadow: 0 0 0 1px #222;
}
.s-clip {
    background: #ffd500;
    box-shadow: 0 0 0 1px #222;
}
.s-vae {
    background: #ff6e6e;
    box-shadow: 0 0 0 1px #222;
}
.s-image {
    background: #64b5f6;
    box-shadow: 0 0 0 1px #222;
}
.s-mask {
    background: #81c784;
    box-shadow: 0 0 0 1px #222;
}
.w {
    position: relative;
    height: 18px;
    flex: none;
    display: flex;
    align-items: center;
    background: #222;
    border: 1px solid #666;
    border-radius: 9px;
    padding: 0 5px;
    color: #999;
    white-space: nowrap;
    margin-top: 3px;
}
.out + .w {
    margin-top: 2px;
}
.w::before {
    content: "";
    position: absolute;
    left: -7px;
    top: 5px;
    width: 6px;
    height: 6px;
    border: 1px solid #111;
    border-radius: 50%;
}
.no-sock::before, .plain::before {
    display: none;
}
.w em {
    margin-left: auto;
    margin-right: 16px;
    font-style: normal;
    color: #ddd;
    letter-spacing: -0.2px;
}
.l, .r {
    width: 0;
    height: 0;
    flex: none;
    border-top: 5px solid transparent;
    border-bottom: 5px solid transparent;
}
.l {
    border-right: 8px solid #ddd;
    margin-right: 4px;
}
.r {
    border-left: 8px solid #ddd;
}
.l.off {
    border-right-color: #777;
}
.r.off {
    border-left-color: #777;
}
.up {
    border-radius: 0;
    justify-content: center;
}
.up em {
    margin: 0;
}
.plain {
    padding: 0 6px 0 12px;
}
.plain em {
    margin-right: 6px;
}
.plain u {
    width: 12px;
    height: 12px;
    border-radius: 50%;
    background: #8797ad;
    flex: none;
}
.plain u {
    margin-left: -3px;
}
.n-5275 {
    left: 1188px;
    top: 45px;
    width: 472px;
    height: 106px;
}
.n-unet {
    left: 1206px;
    top: 158px;
    width: 321px;
    height: 86px;
}
.n-dual {
    left: 1203px;
    top: 250px;
    width: 414px;
    height: 140px;
}
.n-vae {
    left: 1204px;
    top: 415px;
    width: 405px;
    height: 82px;
}
.n-kj {
    left: 1206px;
    top: 532px;
    width: 404px;
    height: 135px;
}
.n-lora {
    left: 1696px;
    top: 259px;
    width: 240px;
    height: 262px;
}
.n-lora .in + .w {
    margin-top: 0;
}
.n-upscale {
    left: 1706px;
    top: 555px;
    width: 240px;
    height: 89px;
}
.upscale-body {
    padding-top: 20px;
}
.under-badge {
    position: absolute;
    left: 1453px;
    top: 148px;
    width: 72px;
    height: 12px;
    background: #0e2014;
    border-radius: 6px;
}

/* red frames */
.frame {
    position: absolute;
    border: 8px solid #c40808;
    border-radius: 24px;
}
.frame-first {
    left: 375px;
    top: 702px;
    width: 393px;
    height: 143px;
}
.frame-last {
    left: 762px;
    top: 706px;
    width: 394px;
    height: 137px;
    border-color: #d80404;
}
.red {
    background: #3c1616;
}
.red .node-head {
    background: #a83228;
}
.red-body {
    padding-top: 0;
}
.red-body .w:first-child {
    margin-top: 1px;
}
.n-ff {
    left: 389px;
    top: 717px;
    width: 367px;
    height: 113px;
}
.n-lf {
    left: 776px;
    top: 721px;
    width: 365px;
    height: 107px;
}

/* muted nodes */
.muted {
    background: rgba(76, 24, 88, .88);
    color: #6f4f76;
    box-shadow: none;
}
.muted .node-head {
    background: transparent;
    color: #6d4a74;
}
.muted .dot {
    background: #5f3a68;
}
.muted .out {
    color: #6f4f76;
}
.muted .out .sock {
    background: #6a5a80;
}
.muted .w {
    background: rgba(255, 255, 255, .02);
    border-color: #5a2d62;
    color: #6f4f76;
}
.muted .w em {
    color: #755579;
}
.muted .l, .muted .r {
    border-left-color: #6f4f76;
    border-right-color: #6f4f76;
}
.n-ff2 {
    left: 393px;
    top: 838px;
    width: 367px;
    height: 210px;
}
.n-lf2 {
    left: 782px;
    top: 842px;
    width: 356px;
    height: 210px;
}

/* green nodes */
.green {
    background: #355733;
}
.green .node-head {
    background: #243a22;
}
.n-anchor {
    left: 22px;
    top: 847px;
    width: 349px;
    height: 200px;
}
.n-anchor .node-body {
    padding-top: 4px;
}
.n-global {
    left: 1164px;
    top: 784px;
    width: 396px;
    height: 157px;
}
.string-out {
    padding-right: 7px;
}
.n-global .node-body {
    padding: 3px 10px 0;
}
.prompt {
    height: 90px;
    margin-top: 13px;
    background: #222;
    border-left: 2px solid #ddd;
    color: #ddd;
    font-size: 9.500px;
    letter-spacing: -0.38px;
    padding: 3px 2px;
    white-space: nowrap;
}
.n-local {
    left: 1164px;
    top: 960px;
    width: 396px;
    height: 60px;
}
.n-hidden {
    left: 1585px;
    top: 950px;
    width: 184px;
    height: 33px;
}

/* links */
.links {
    position: absolute;
    left: 0;
    top: 0;
    width: 1856px;
    height: 984px;
    fill: none;
    pointer-events: none;
}
.l-red path {
    stroke: #ff6e6e;
    stroke-width: 3;
}
.dots-red circle {
    fill: #ff6e6e;
}
.l-grey {
    stroke: #a9baab;
    stroke-width: 2.500;
}
.l-purple {
    stroke: #b39ddb;
    stroke-width: 2.500;
}
.l-yellow {
    stroke: #ffd500;
    stroke-width: 3;
}
.l-blue path {
    stroke: #64b5f6;
    stroke-width: 3;
}
.l-violet path {
    stroke: #7a78e8;
    stroke-width: 2.500;
}

/* id badges */
.badge {
    position: absolute;
    height: 18px;
    padding: 0 5px;
    background: #0e2014;
    border-radius: 5px;
    color: #fff;
    font-size: 11px;
    font-weight: 700;
    letter-spacing: -0.3px;
    display: flex;
    align-items: center;
    gap: 4px;
    white-space: nowrap;
}
.badge svg {
    width: 12px;
    height: 13px;
}
.b-5275 {
    left: 1602px;
    top: 25px;
}
.b-5209 {
    left: 1558px;
    top: 230px;
}
.b-5207 {
    left: 1550px;
    top: 395px;
}
.b-5205 {
    left: 1523px;
    top: 513px;
}
.b-5383 {
    left: 318px;
    top: 747px;
}
.b-2004 {
    left: 312px;
    top: 827px;
}
.b-5128 {
    left: 1497px;
    top: 765px;
}
.b-5187 {
    left: 1501px;
    top: 941px;
}

/* notepad */
.notepad {
    position: absolute;
    left: 375px;
    top: 273px;
    width: 546px;
    height: 336px;
    background: #f9f9f9;
    border-radius: 8px;
    overflow: hidden;
    box-shadow: 0 6px 18px rgba(0, 0, 0, .45);
    display: flex;
    flex-direction: column;
    font-family: "Noto Sans", sans-serif;
    z-index: 3;
}
.np-title {
    height: 41px;
    flex: none;
    background: #cfdcea;
    display: flex;
    align-items: flex-end;
}
.np-icon {
    margin: 0 17px 9px 17px;
}
.np-tab {
    width: 238px;
    height: 31px;
    background: #f3f6f9;
    border-radius: 7px 7px 0 0;
    display: flex;
    align-items: center;
    padding: 0 17px 0 9px;
    font-size: 12px;
    color: #1a1a1a;
    white-space: nowrap;
}
.np-tab span {
    flex: 1;
    overflow: hidden;
}
.np-tab b {
    width: 6px;
    height: 6px;
    border-radius: 50%;
    background: #777;
}
.np-plus {
    margin: 0 0 9px 17px;
}
.np-win {
    margin-left: auto;
    align-self: flex-start;
    margin-top: 8px;
    padding-right: 17px;
    display: flex;
    gap: 34px;
}
.np-menu {
    height: 33px;
    flex: none;
    background: #f3f6f9;
    border-bottom: 1px solid #e4e6e9;
    display: flex;
    align-items: center;
    padding-left: 14px;
    font-size: 13px;
    color: #222;
}
.np-m {
    margin-right: 28px;
}
.m-edit {
    margin-right: 29px;
}
.m-view {
    margin-right: 0;
}
.np-h1 {
    margin-left: 62px;
    font-size: 12.500px;
}
.np-chev {
    margin-left: 7.500px;
}
.np-list {
    margin-left: 23px;
}
.np-list + .np-chev {
    margin-left: 8.500px;
}
.np-b {
    margin-left: 22px;
    font-size: 14px;
    font-family: "Liberation Sans", sans-serif;
}
.np-i {
    margin-left: 21px;
}
.np-s {
    margin-left: 18px;
}
.np-more {
    margin-left: 20px;
}
.np-ann {
    margin-left: 55px;
}
.np-gear {
    margin-left: 17px;
}
.np-text {
    flex: 1;
    padding: 19px 16px 0;
    font: 13.350px/18px "Liberation Mono", monospace;
    color: #1a1a1a;
    white-space: nowrap;
}
.np-tight {
    letter-spacing: -0.25px;
}
.caret {
    display: inline-block;
    width: 1px;
    height: 17px;
    background: #111;
    vertical-align: -4px;
}
.np-status {
    height: 32px;
    flex: none;
    background: #f3f6f9;
    border-top: 1px solid #e4e6e9;
    display: flex;
    align-items: center;
    font-size: 11px;
    color: #666;
    white-space: nowrap;
}
.np-status span {
    height: 18px;
    line-height: 18px;
    border-right: 1px solid #dfe2e6;
    padding-left: 9px;
    flex: none;
    overflow: hidden;
}
.np-status .st-1 {
    width: 96px;
    padding-left: 23px;
}
.st-2 {
    width: 96px;
}
.st-3 {
    width: 96px;
}
.np-status .st-4 {
    width: 60px;
    padding-left: 12px;
}
.np-status .st-5 {
    width: 96px;
    padding-left: 12px;
}
.np-status .st-6 {
    border: 0;
    padding-left: 11px;
}

/* overlays */
.task-tab {
    position: absolute;
    left: 1822px;
    top: 390px;
    width: 34px;
    height: 96px;
    background: #1b1f26;
    border-radius: 8px 0 0 8px;
    display: flex;
    flex-direction: column;
    align-items: center;
    padding-top: 11px;
    gap: 5px;
    z-index: 3;
}
.task-tab span {
    writing-mode: vertical-rl;
    color: #eee;
    font: 12px "Liberation Sans", sans-serif;
    letter-spacing: .5px;
}
.minimap {
    position: absolute;
    left: 1547px;
    top: 775px;
    width: 248px;
    height: 199px;
    background: #15171d;
    border-radius: 4px;
    box-shadow: 0 0 0 1px #2b2d33;
    z-index: 4;
}
.mini-map {
    display: block;
    width: 248px;
    height: 199px;
}
.mini-set {
    position: absolute;
    left: 7px;
    top: 9px;
}
.mini-x {
    position: absolute;
    right: 9px;
    top: 9px;
}
.mm-dark {
    fill: #3a3a3a;
}
.controls {
    position: absolute;
    left: 1805px;
    top: 733px;
    width: 41px;
    height: 241px;
    background: #24262c;
    border: 1px solid #33363c;
    border-radius: 7px;
    display: flex;
    flex-direction: column;
    align-items: center;
    gap: 22px;
    padding-top: 11px;
    z-index: 4;
}
.controls svg {
    width: 18px;
    height: 18px;
    flex: none;
    fill: none;
    stroke: #e4e4e4;
    stroke-width: 1.700;
}
.controls .ctl-map {
    stroke: #3b82f6;
}
```
